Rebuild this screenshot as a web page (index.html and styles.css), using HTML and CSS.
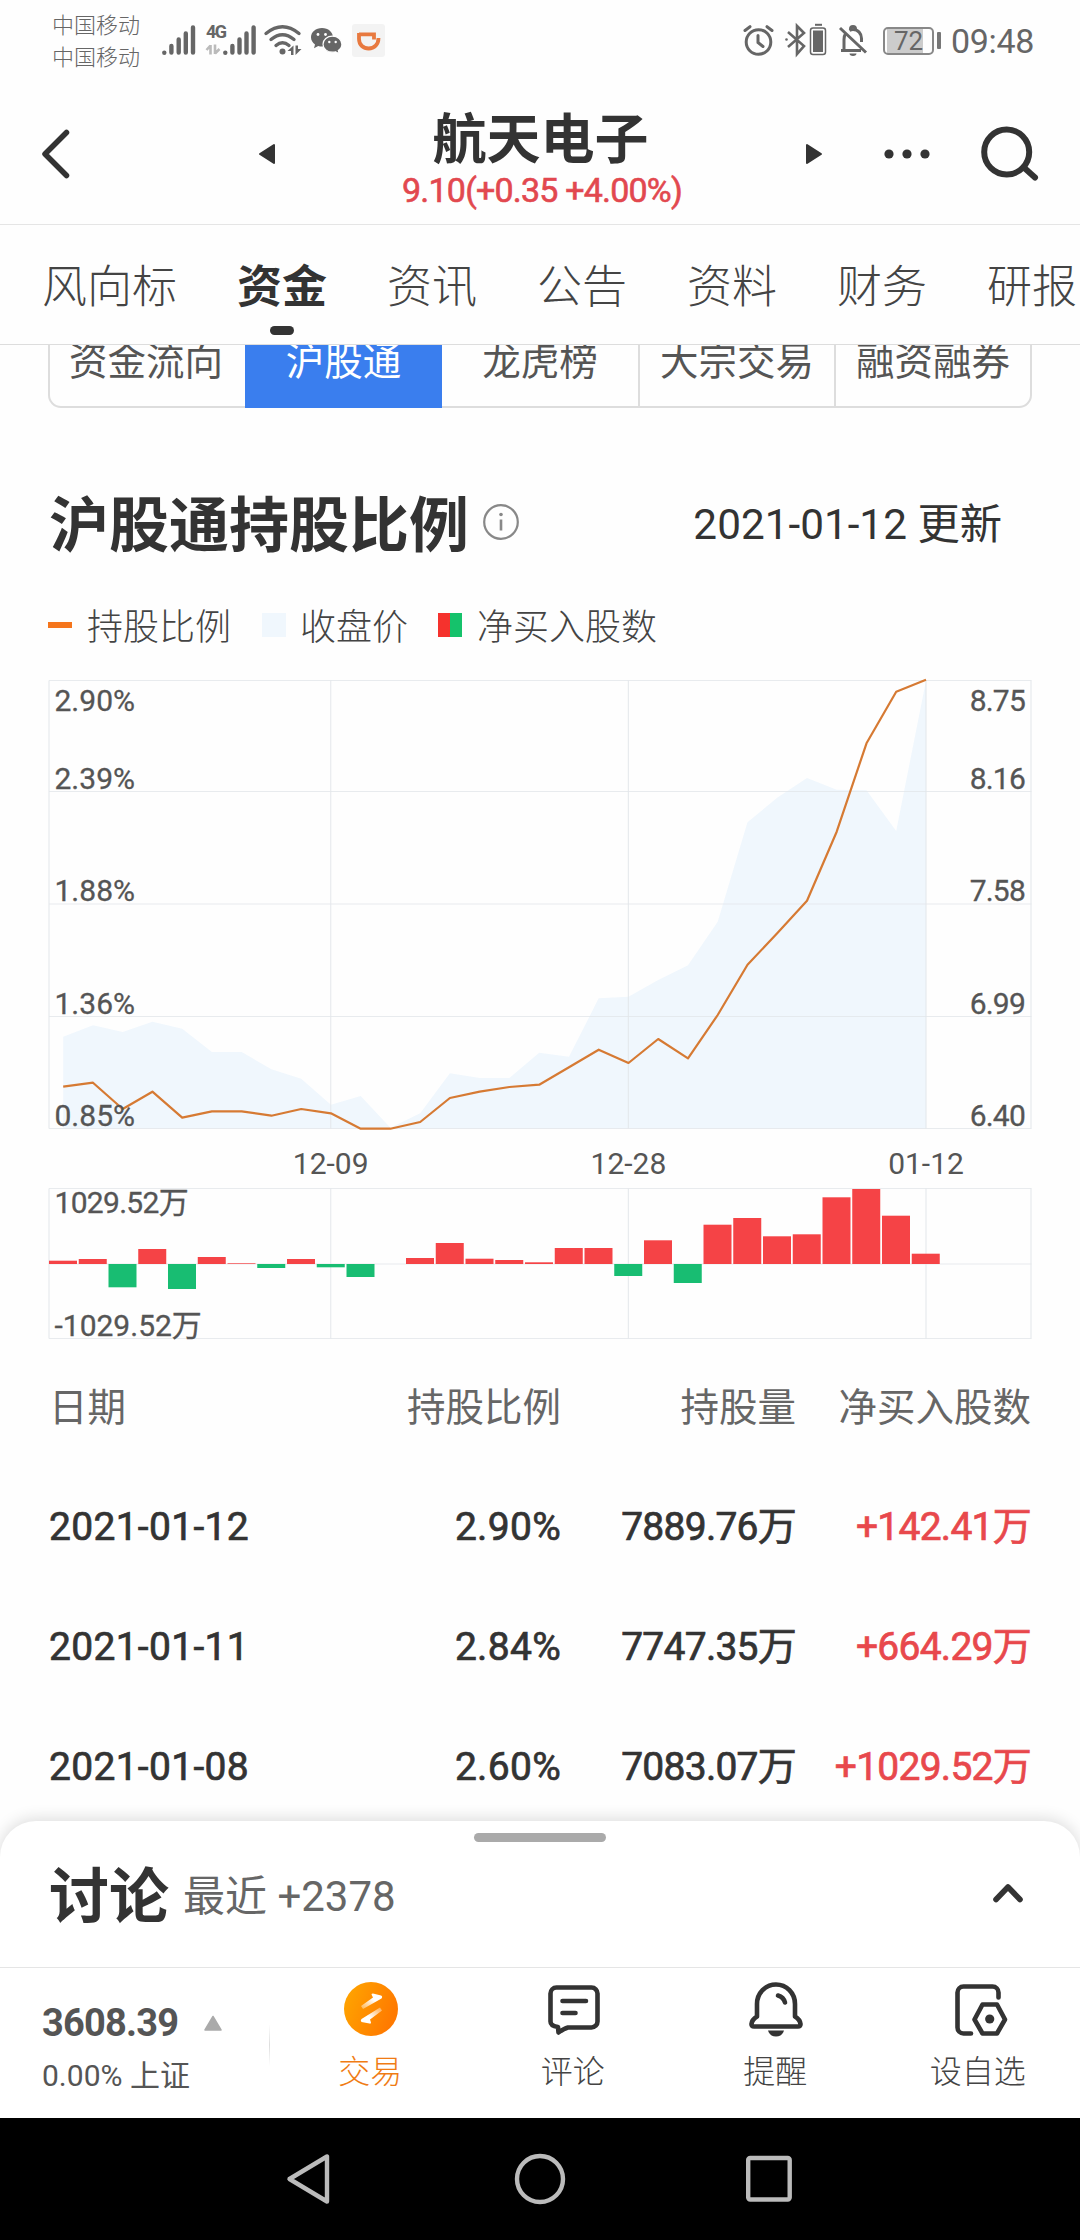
FILE: index.html
```html
<!DOCTYPE html>
<html lang="zh-CN">
<head>
    <meta charset="UTF-8">
    <meta name="viewport" content="width=device-width, initial-scale=1.0">
    <title>航天电子</title>
    <link rel="stylesheet" href="styles.css">
</head>
<body>
    <div class="status-bar">
        <div class="carriers">
            <div>中国移动</div>
            <div>中国移动</div>
        </div>
        <svg class="ic-signal" width="34" height="30" viewBox="0 0 34 30">
            <g stroke="#666" stroke-width="4.4" stroke-linecap="round">
                <path d="M2.3 27.6v.1M9.4 21v6.6M16.7 14.5v13.1M23.8 8.5v19.1M31 2.4v25.2"/>
            </g>
        </svg>
        <svg class="ic-signal4g" width="50" height="30" viewBox="0 0 50 30">
            <text x="0" y="13" class="label-4g">4G</text>
            <path d="M4.500 20v9.500M0.500 25L4.500 20.500M9 19.500v9.500M13.500 24L9 28.500" stroke="#bbb" stroke-width="2.600" fill="none"/>
            <g stroke="#666" stroke-width="4.4" stroke-linecap="round">
                <path d="M19.300 27.6v.1M26.400 21v6.6M33.500 14.5v13.1M40.500 8.5v19.1M47.600 2.4v25.2"/>
            </g>
        </svg>
        <svg class="ic-wifi" width="38" height="30" viewBox="0 0 38 30">
            <g fill="none" stroke="#666" stroke-width="3.4" stroke-linecap="round">
                <path d="M2 8.500Q18.500 -5 35 8.500M7 14.500Q18.500 5 30 14.500M12 20.500Q18.500 15 25 20.500"/>
            </g>
            <circle cx="18.500" cy="26.500" r="3" fill="#666"/>
            <path d="M29.500 20.500v9.500h-2.500v-4h-3.500zM31.500 20.500h2.500v3.500h3.500l-6 6z" fill="#666"/>
        </svg>
        <svg class="ic-wechat" width="31" height="26" viewBox="0 0 31 26">
            <path d="M11 0C4.800 0 0 4 0 9.300c0 3 1.600 5.500 4 7.200l-1 3.700 4.200-2.200c1.200.4 2.500.5 3.800.5 6.300 0 11-4.200 11-9.200S17.300 0 11 0z" fill="#666"/>
            <path d="M21.500 8.200c-5.300 0-9.500 3.500-9.500 8s4.200 8 9.500 8c1.100 0 2.200-.1 3.200-.4l3.500 1.900-.9-3.200c2.200-1.500 3.600-3.700 3.600-6.300 0-4.500-4.200-8-9.400-8z" fill="#666" stroke="#fff" stroke-width="1.200"/>
            <g fill="#fff"><circle cx="7" cy="6.500" r="1.400"/><circle cx="14.500" cy="6.500" r="1.400"/><circle cx="18.300" cy="14" r="1.200"/><circle cx="24.700" cy="14" r="1.200"/></g>
        </svg>
        <svg class="ic-didi" width="33" height="33" viewBox="0 0 33 33">
            <rect width="33" height="33" rx="3" fill="#f3f3f3"/>
            <path d="M7 10.300h15v5.200M7 9v6c0 6 4.500 9.500 9.700 9.500 5.500 0 9.800-4 9.800-10.500" fill="none" stroke="#e8793f" stroke-width="3.800"/>
        </svg>
        <svg class="ic-alarm" width="31" height="31" viewBox="0 0 31 31">
            <g fill="none" stroke="#666" stroke-width="3" stroke-linecap="round">
                <circle cx="15.500" cy="17" r="12.300"/>
                <path d="M15 10.500v7l5 4M2 5.500L7 1.700M29 5.500L24 1.700"/>
            </g>
        </svg>
        <svg class="ic-bt" width="42" height="32" viewBox="0 0 42 32">
            <path d="M3 8l16 14-7 8V2l7 7L3 23" fill="none" stroke="#666" stroke-width="2.600"/>
            <circle cx="1.500" cy="15.500" r="1.300" fill="#666"/>
            <path d="M30 .8h7" stroke="#666" stroke-width="2"/>
            <rect x="25.500" y="4" width="15" height="26.500" rx="2.500" fill="none" stroke="#666" stroke-width="1.500"/>
            <rect x="28" y="6.500" width="10" height="21.500" fill="#666"/>
        </svg>
        <svg class="ic-mute" width="29" height="31" viewBox="0 0 29 31">
            <g fill="none" stroke="#666" stroke-width="3">
                <path d="M1 3l26 24.500M2 25.500h20M5 25V14.500c0-2.500.5-4.500 1.500-6M10.500 5.500c1-.6 2-1 3.500-1 5 0 8.500 4 8.500 9v3.500"/>
                <path d="M11.500 4a2.500 2.500 0 0 1 5 0"/>
            </g>
            <path d="M10.500 28.500h7a3.500 2.500 0 0 1-7 0z" fill="#666"/>
        </svg>
        <div class="battery"><span>72</span></div>
        <i class="battery-nub"></i>
        <div class="clock">09:48</div>
    </div>

    <header class="header">
        <svg class="back" width="30" height="50" viewBox="0 0 30 50">
            <path d="M25.500 3.500L4 25l21.500 21.500" fill="none" stroke="#333" stroke-width="5.500" stroke-linecap="round" stroke-linejoin="round"/>
        </svg>
        <svg class="prev" width="18" height="22" viewBox="0 0 18 22">
            <path d="M16 2v18L2 11z" fill="#333" stroke="#333" stroke-width="2" stroke-linejoin="round"/>
        </svg>
        <div class="stock">
            <div class="stock-name">航天电子</div>
            <div class="stock-price">9.10(+0.35 +4.00%)</div>
        </div>
        <svg class="next" width="18" height="22" viewBox="0 0 18 22">
            <path d="M2 2v18l14-9z" fill="#333" stroke="#333" stroke-width="2" stroke-linejoin="round"/>
        </svg>
        <svg class="more" width="46" height="10" viewBox="0 0 46 10">
            <g fill="#333"><circle cx="5" cy="5" r="4.600"/><circle cx="23" cy="5" r="4.600"/><circle cx="41" cy="5" r="4.600"/></g>
        </svg>
        <svg class="search" width="58" height="56" viewBox="0 0 58 56">
            <g fill="none" stroke="#333" stroke-width="6" stroke-linecap="round">
                <circle cx="25.700" cy="26" r="22.500"/>
                <path d="M44 42.500l10 9"/>
            </g>
        </svg>
    </header>

    <nav class="tabs">
        <a>风向标</a>
        <a class="active">资金</a>
        <a>资讯</a>
        <a>公告</a>
        <a>资料</a>
        <a>财务</a>
        <a>研报</a>
    </nav>

    <main class="content">
        <div class="segments">
            <div>资金流向</div>
            <div class="active">沪股通</div>
            <div>龙虎榜</div>
            <div>大宗交易</div>
            <div>融资融券</div>
        </div>

        <div class="section-title">
            <h2>沪股通持股比例</h2>
            <svg width="38" height="38" viewBox="0 0 38 38">
                <circle cx="19" cy="19" r="16.800" fill="none" stroke="#888" stroke-width="2.200"/>
                <path d="M19 16.500v11" stroke="#888" stroke-width="2.600"/>
                <circle cx="19" cy="11.500" r="1.800" fill="#888"/>
            </svg>
            <span class="updated">2021-01-12 更新</span>
        </div>

        <div class="legend">
            <i class="mark-line"></i><span>持股比例</span>
            <i class="mark-area"></i><span>收盘价</span>
            <i class="mark-bar"></i><span>净买入股数</span>
        </div>

        <svg id="chart" class="chart" width="1080" height="688" viewBox="0 660 1080 688"></svg>

        <table class="holdings">
            <thead>
                <tr><th>日期</th><th>持股比例</th><th>持股量</th><th>净买入股数</th></tr>
            </thead>
            <tbody>
                <tr><td>2021-01-12</td><td>2.90%</td><td>7889.76万</td><td class="up">+142.41万</td></tr>
                <tr><td>2021-01-11</td><td>2.84%</td><td>7747.35万</td><td class="up">+664.29万</td></tr>
                <tr><td>2021-01-08</td><td>2.60%</td><td>7083.07万</td><td class="up">+1029.52万</td></tr>
            </tbody>
        </table>
    </main>

    <section class="sheet">
        <div class="handle"></div>
        <div class="sheet-row">
            <h2>讨论</h2>
            <span>最近 +2378</span>
            <svg width="32" height="22" viewBox="0 0 32 22">
                <path d="M4 17.500L16 5l12 12.500" fill="none" stroke="#333" stroke-width="5.600" stroke-linecap="round" stroke-linejoin="round"/>
            </svg>
        </div>
    </section>

    <footer class="toolbar">
        <div class="index">
            <div class="index-value">3608.39
                <svg width="18" height="16" viewBox="0 0 18 16"><path d="M9 1.500L17 15H1z" fill="#aaa" stroke="#aaa" stroke-width="1.500" stroke-linejoin="round"/></svg>
            </div>
            <div class="index-change">0.00% 上证</div>
        </div>
        <div class="tool trade">
            <svg width="56" height="56" viewBox="0 0 56 56">
                <defs>
                    <linearGradient id="orange" x1="0" y1="0" x2="1" y2="0.400">
                        <stop offset="0" stop-color="#ffa800"/>
                        <stop offset="1" stop-color="#ff7a00"/>
                    </linearGradient>
                    <linearGradient id="fadeUp" x1="0" y1="1" x2="1" y2="0">
                        <stop offset="0" stop-color="#fff" stop-opacity="0.300"/>
                        <stop offset="0.600" stop-color="#fff"/>
                    </linearGradient>
                    <linearGradient id="fadeDown" x1="1" y1="0" x2="0" y2="1">
                        <stop offset="0" stop-color="#fff" stop-opacity="0.300"/>
                        <stop offset="0.600" stop-color="#fff"/>
                    </linearGradient>
                </defs>
                <circle cx="28" cy="28" r="27" fill="url(#orange)"/>
                <path d="M18 25L30 16.500L28.500 13.500Q28.500 12.500 30 12.500L38 14.500Q40 15.500 38.500 17.500L20 28Z" fill="url(#fadeUp)"/>
                <path d="M39 29.500L27 38.500L28 41.500Q28 43 26.500 42.500L18.500 41Q17 39.500 18.500 38L37 26.500Z" fill="url(#fadeDown)"/>
            </svg>
            <span>交易</span>
        </div>
        <div class="tool">
            <svg width="56" height="56" viewBox="0 0 56 56">
                <g fill="none" stroke="#333" stroke-width="4.600" stroke-linecap="round" stroke-linejoin="round">
                    <path d="M10.500 6.500h35a6 6 0 0 1 6 6v28a6 6 0 0 1-6 6H22q-4 1-9.500 5l-.5-5.500Q4.500 45 4.500 40.500v-28a6 6 0 0 1 6-6z"/>
                    <path d="M16.500 20h23.500M16.500 32h13"/>
                </g>
            </svg>
            <span>评论</span>
        </div>
        <div class="tool">
            <svg width="56" height="56" viewBox="0 0 56 56">
                <g fill="none" stroke="#333" stroke-width="4.600" stroke-linecap="round" stroke-linejoin="round">
                    <path d="M9 23a19 19.500 0 0 1 38 0v12.500q5 3 5.500 7.500.2 2.500-2.500 2.500H6q-2.700 0-2.500-2.500Q4 38.500 9 35.500z"/>
                    <path d="M30 14.500q5.500 1.500 7 7"/>
                </g>
                <path d="M20 49.500h16q-2 6-8 6t-8-6z" fill="#333"/>
            </svg>
            <span>提醒</span>
        </div>
        <div class="tool">
            <svg width="56" height="56" viewBox="0 0 56 56">
                <g fill="none" stroke="#333" stroke-width="4.600" stroke-linecap="round" stroke-linejoin="round">
                    <path d="M20 52.500h-7.500a6 6 0 0 1-6-6v-35a6 6 0 0 1 6-6h29a6 6 0 0 1 6 6v5"/>
                    <path d="M31.500 23.500h14.500l8 15-8 14H31.500l-8-14z"/>
                </g>
                <circle cx="38.700" cy="38" r="4.600" fill="#333"/>
            </svg>
            <span>设自选</span>
        </div>
    </footer>

    <div class="android-nav">
        <svg width="46" height="52" viewBox="0 0 46 52"><path d="M41 3.500v45L3.500 26z" fill="none" stroke="#bbb" stroke-width="4.400" stroke-linejoin="round"/></svg>
        <svg width="52" height="52" viewBox="0 0 52 52"><circle cx="27" cy="26" r="23" fill="none" stroke="#bbb" stroke-width="4.400"/></svg>
        <svg width="46" height="52" viewBox="0 0 46 52"><rect x="2.200" y="5" width="41.500" height="41.500" rx="2" fill="none" stroke="#bbb" stroke-width="4.400"/></svg>
    </div>

    <script>
        const STEP = 29.75;
        const FIRST_X = 63.2;
        const ZERO_Y = 1264;

        // y of each trading day
        const closeY = [1036.7, 1025.3, 1032, 1021.7, 1028.7, 1052, 1052, 1069.3, 1078.7, 1104.7,
            1096, 1127.7, 1113.3, 1073.3, 1078, 1078, 1052.7, 1056.7, 998.3, 996.7,
            980, 965.3, 921.7, 822.3, 797.7, 778, 789.7, 790.3, 831, 680.7];
        const ratioY = [1086.7, 1082.7, 1109, 1091.7, 1117.7, 1111.3, 1111.3, 1115.7, 1109, 1113.3,
            1128.7, 1128.7, 1122, 1098, 1091.7, 1087, 1084.7, 1067.3, 1049.7, 1063,
            1039, 1058.3, 1015, 964.7, 933.3, 900.7, 831.7, 743.3, 691.7, 679.7];
        // net buy bars, positive is up
        const netBuy = [3.3, 5, -23.3, 15, -25, 7, 0.7, -4, 5, -3.3, -13, 0, 6, 21, 5.3,
            4, 1.7, 16, 16, -12, 23.7, -19, 39.3, 46, 27.7, 29.7, 66.7, 75, 48.3, 10.3];

        const px = i => (FIRST_X + i * STEP).toFixed(1);
        const points = ys => ys.map((y, i) => px(i) + "," + y).join(" ");
        const text = (x, y, label, cls) => `<text x="${x}" y="${y}" class="${cls}">${label}</text>`;

        let svg = "";

        // area and grid
        svg += `<polygon class="area" points="${px(0)},1128.5 ${points(closeY)} ${px(29)},1128.5"/>`;
        [680.5, 791.5, 904, 1016.5, 1128.5, 1188.5, 1264, 1338.5].forEach(y => {
            svg += `<path class="grid" d="M49 ${y}H1031.500"/>`;
        });
        [49, 330.7, 628.4, 926, 1031].forEach(x => {
            svg += `<path class="grid" d="M${x} 680.500V1128.500M${x} 1188.500V1338.500"/>`;
        });

        // holding ratio
        svg += `<polyline class="ratio" points="${points(ratioY)}"/>`;

        // net buy
        netBuy.forEach((h, i) => {
            const x = FIRST_X + i * STEP - 14.2;
            svg += `<rect class="${h > 0 ? "buy" : "sell"}" x="${x}" y="${h > 0 ? ZERO_Y - h : ZERO_Y}" width="28" height="${Math.abs(h)}"/>`;
        });

        // labels
        const baselines = [711, 789, 901, 1014, 1126];
        ["2.90%", "2.39%", "1.88%", "1.36%", "0.85%"].forEach((t, i) => svg += text(54.5, baselines[i], t, "axis"));
        ["8.75", "8.16", "7.58", "6.99", "6.40"].forEach((t, i) => svg += text(1025, baselines[i], t, "axis right"));
        svg += text(330.7, 1174, "12-09", "date");
        svg += text(628.4, 1174, "12-28", "date");
        svg += text(926, 1174, "01-12", "date");
        svg += text(54.5, 1213, "1029.52万", "axis volume");
        svg += text(54.5, 1336, "-1029.52万", "axis");

        document.getElementById("chart").innerHTML = svg;
    </script>
</body>
</html>
```
FILE: styles.css
```css
* {
    box-sizing: border-box;
}

body {
    margin: 0;
    width: 1080px;
    height: 2240px;
    display: flex;
    flex-direction: column;
    overflow: hidden;
    background: #fefefe;
    color: #333;
    font-family: Roboto, "Noto Sans CJK SC", sans-serif;
}

svg {
    display: block;
    flex: none;
    overflow: visible;
}

h2 {
    margin: 0;
    font-size: 60px;
    font-weight: bold;
}

/* Status bar */
.status-bar {
    height: 72px;
    display: flex;
    padding-left: 52px;
    color: #666;
}

.carriers {
    width: 88px;
    padding-top: 10px;
    font-size: 22px;
    font-weight: 300;
    line-height: 32px;
    white-space: nowrap;
}

.ic-signal { margin: 25px 0 0 22px; }
.ic-signal4g { margin: 25px 0 0 10px; }
.ic-wifi { margin: 25px 0 0 8px; }
.ic-wechat { margin: 28px 0 0 9px; }
.ic-didi { margin: 24px 0 0 10px; }
.ic-alarm { margin: 25px 0 0 358px; }
.ic-bt { margin: 24px 0 0 11px; }
.ic-mute { margin: 25px 0 0 12px; }

.label-4g {
    font-size: 18px;
    font-weight: bold;
    fill: #666;
    letter-spacing: -1.500px;
}

.battery {
    width: 51px;
    height: 28px;
    margin: 27px 0 0 15px;
    border: 2px solid #888;
    border-radius: 5px;
    background: linear-gradient(90deg, #ccc 36px, transparent 36px) 2px 0 / 100% 100% no-repeat;
    font-size: 26px;
    line-height: 25px;
    text-align: center;
}

.battery-nub {
    width: 4px;
    height: 17px;
    margin: 32px 0 0 3px;
    border-radius: 1px;
    background: #777;
}

.clock {
    margin: 21px 0 0 10px;
    font-size: 34px;
    line-height: 40px;
    letter-spacing: -0.3px;
}

/* Header */
.header {
    height: 153px;
    display: flex;
    align-items: center;
    padding: 12px 40px 0 41px;
    border-bottom: 1px solid #e5e5e5;
}

.prev { margin-left: 187px; }

.stock {
    width: 529px;
    margin-top: 14px;
    text-align: center;
}

.stock-name {
    font-size: 54px;
    font-weight: bold;
    line-height: 58px;
}

.stock-price {
    padding-left: 3px;
    color: #e2484f;
    font-size: 34px;
    line-height: 40px;
    letter-spacing: -0.800px;
    -webkit-text-stroke: 0.600px;
}

.more { margin-left: 61px; }
.search { margin: -1px 0 0 51px; }

/* Tabs */
.tabs {
    height: 120px;
    display: flex;
    flex: none;
    gap: 60px;
    padding-left: 42px;
    border-bottom: 1px solid #ddd;
    font-size: 45px;
    line-height: 125px;
    color: #444;
    white-space: nowrap;
    font-weight: 300;
}

.tabs a {
    display: flex;
    flex-direction: column;
    align-items: center;
}

.tabs .active {
    color: #333;
    font-weight: bold;
}

.tabs .active::after {
    content: "";
    width: 24px;
    height: 9px;
    margin-top: -24px;
    border-radius: 5px;
    background: #333;
}

/* Scrolled content */
.content {
    height: 1476px;
    flex: none;
    overflow: hidden;
}

.segments {
    height: 94px;
    display: grid;
    grid-template-columns: repeat(5, 1fr);
    grid-template-rows: 90px;
    margin: -31px 48px 0 48px;
    border: 2px solid #ddd;
    border-radius: 13px;
    font-size: 38.500px;
    line-height: 92px;
    color: #555;
    text-align: center;
}

.segments div {
    border-left: 2px solid #ddd;
    white-space: nowrap;
}

.segments div:first-child {
    text-indent: -4px;
    border-left: none;
}

.segments .active {
    margin: -2px 0 -2px -1px;
    border-color: #3a7eee;
    background: #3a7eee;
    color: #fff;
    line-height: 96px;
    text-indent: -2px;
}

.segments .active + div {
    border-left: none;
}

.section-title {
    height: 80px;
    display: flex;
    align-items: center;
    margin: 72px 78px 0 49px;
}

.section-title svg {
    margin: 4px 0 0 13px;
}

.updated {
    margin: 1px 0 0 auto;
    font-size: 42.300px;
}

.legend {
    height: 40px;
    display: flex;
    align-items: center;
    margin: 48px 0 0 48px;
    font-size: 36px;
    line-height: 40px;
    font-weight: 300;
    color: #444;
}

.mark-line {
    width: 24px;
    height: 6px;
    margin: -7px 15px 0 0;
    background: #f5751c;
}

.mark-area {
    width: 24px;
    height: 24px;
    margin: -7px 14px 0 31px;
    background: #f0f7fd;
}

.mark-bar {
    width: 24px;
    height: 24px;
    margin: -7px 15px 0 30px;
    background: linear-gradient(90deg, #f5322d 50%, #15c26b 50%);
}

/* Chart */
.chart {
    margin-top: 12px;
}

.area { fill: #f0f7fd; }

.grid {
    stroke: #e2e6ea;
    stroke-width: 1.200;
    stroke-opacity: 0.800;
    fill: none;
}

.ratio {
    fill: none;
    stroke: #d67a33;
    stroke-width: 2.200;
    stroke-linejoin: round;
}

.buy { fill: #f54346; }
.sell { fill: #18bd72; }

.axis {
    font-size: 30px;
    fill: #555;
    stroke: #555;
    stroke-width: 0.300px;
}

.right {
    text-anchor: end;
    letter-spacing: -0.800px;
}

.volume {
    letter-spacing: -0.700px;
}

.date {
    font-size: 30px;
    fill: #555;
    text-anchor: middle;
}

/* Holdings table */
.holdings {
    width: 982px;
    margin: 1px 0 0 49px;
    border-collapse: collapse;
    table-layout: fixed;
    font-size: 39px;
    white-space: nowrap;
}

.holdings th,
.holdings td {
    height: 120px;
    padding: 0;
    text-align: right;
    line-height: 60px;
}

.holdings th {
    height: 118px;
    font-size: 38.500px;
    font-weight: normal;
    color: #666;
}

.holdings td {
    letter-spacing: -0.750px;
    -webkit-text-stroke: 0.700px;
}

.holdings th:first-child,
.holdings td:first-child {
    width: 270px;
    text-align: left;
}

.holdings td:first-child,
.holdings td:nth-child(2) {
    letter-spacing: 0.300px;
}

.holdings th:nth-child(2) { width: 242px; }
.holdings th:nth-child(3) { width: 235px; }

.holdings .up { color: #e8484c; }

/* Discussion sheet */
.sheet {
    height: 147px;
    flex: none;
    position: relative;
    padding-top: 12px;
    border-radius: 36px 36px 0 0;
    border-bottom: 1px solid #e5e5e5;
    background: #fff;
    box-shadow: 0 -2px 16px rgba(0, 0, 0, 0.140);
}

.handle {
    width: 132px;
    height: 9px;
    margin: 0 auto;
    border-radius: 5px;
    background: #aaa;
}

.sheet-row {
    display: flex;
    align-items: center;
    height: 80px;
    margin: 16px 56px 0 49px;
    line-height: 80px;
}

.sheet-row span {
    margin: -2px 0 0 14px;
    font-size: 42px;
    color: #666;
}

.sheet-row svg {
    margin: -10px 0 0 auto;
}

/* Bottom toolbar */
.toolbar {
    height: 150px;
    flex: none;
    position: relative;
    display: flex;
    background: #fff;
}

.index {
    width: 270px;
    padding: 33px 0 0 42px;
    color: #555;
    background: linear-gradient(transparent, #ddd, transparent) 100% 56px / 1px 42px no-repeat;
}

.index-value {
    display: flex;
    align-items: center;
    gap: 26px;
    font-size: 38px;
    font-weight: bold;
    line-height: 44px;
    letter-spacing: -0.800px;
}

.index-change {
    margin-top: 11px;
    font-size: 30px;
    line-height: 40px;
}

.tool {
    flex: 1;
    display: flex;
    flex-direction: column;
    align-items: center;
    padding-top: 13px;
    font-size: 32px;
    font-weight: 300;
    line-height: 40px;
    color: #444;
}

.tool span {
    margin: 15px 2px 0 0;
}

.trade {
    color: #f07c14;
}

/* System navigation */
.android-nav {
    height: 122px;
    flex: none;
    position: relative;
    display: flex;
    justify-content: space-between;
    padding: 35px 288px 0 286px;
    background: #000;
}
```
